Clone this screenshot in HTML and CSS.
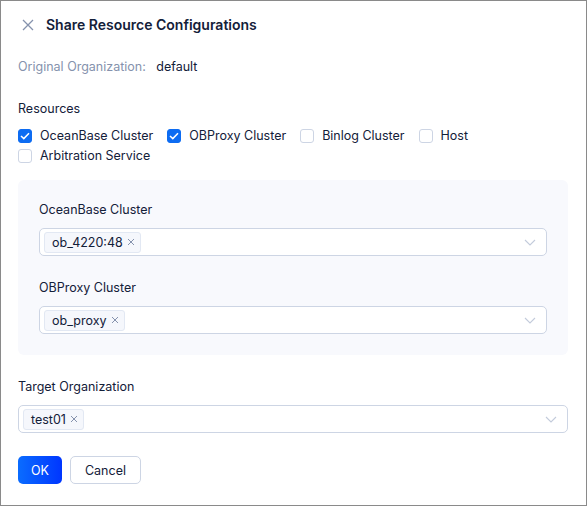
FILE: index.html
```html
<!DOCTYPE html>
<html lang="en">
<head>
  <meta charset="UTF-8" />
  <title>Share Resource Configurations</title>
  <link rel="stylesheet" href="styles.css">
</head>
<body>

<div class="modal">
  <header class="modal-header">
    <span class="close">
      <svg width="12" height="12" viewBox="0 0 12 12"><path d="M1 1L11 11M11 1L1 11" stroke="#8592ad" stroke-width="1.3" fill="none"/></svg>
    </span>
    <h1>Share Resource Configurations</h1>
  </header>

  <div class="origin">
    <span class="origin-label">Original Organization:</span>
    <span class="origin-value">default</span>
  </div>

  <div class="field resources">
    <label class="field-label">Resources</label>
    <div class="checks">
      <label class="check"><span class="box checked"><svg width="10" height="8" viewBox="0 0 10 8"><path d="M1 4L3.8 6.6L9 1.2" stroke="#fff" stroke-width="1.5" fill="none"/></svg></span>OceanBase Cluster</label>
      <label class="check"><span class="box checked"><svg width="10" height="8" viewBox="0 0 10 8"><path d="M1 4L3.8 6.6L9 1.2" stroke="#fff" stroke-width="1.5" fill="none"/></svg></span>OBProxy Cluster</label>
      <label class="check"><span class="box"></span>Binlog Cluster</label>
      <label class="check"><span class="box"></span>Host</label>
      <label class="check"><span class="box"></span>Arbitration Service</label>
    </div>
  </div>

  <div class="panel">
    <div class="field">
      <label class="field-label">OceanBase Cluster</label>
      <div class="select">
        <span class="tag">ob_4220:48<svg class="tag-x" width="8" height="8" viewBox="0 0 8 8"><path d="M1 1L7 7M7 1L1 7" stroke="#8592ad" stroke-width="1" fill="none"/></svg></span>
        <svg class="arrow" width="12" height="12" viewBox="0 0 12 12"><path d="M1 4L6 9L11 4" stroke="#c3cbdb" stroke-width="1.1" fill="none"/></svg>
      </div>
    </div>
    <div class="field">
      <label class="field-label">OBProxy Cluster</label>
      <div class="select">
        <span class="tag">ob_proxy<svg class="tag-x" width="8" height="8" viewBox="0 0 8 8"><path d="M1 1L7 7M7 1L1 7" stroke="#8592ad" stroke-width="1" fill="none"/></svg></span>
        <svg class="arrow" width="12" height="12" viewBox="0 0 12 12"><path d="M1 4L6 9L11 4" stroke="#c3cbdb" stroke-width="1.1" fill="none"/></svg>
      </div>
    </div>
  </div>

  <div class="field">
    <label class="field-label">Target Organization</label>
    <div class="select">
      <span class="tag">test01<svg class="tag-x" width="8" height="8" viewBox="0 0 8 8"><path d="M1 1L7 7M7 1L1 7" stroke="#8592ad" stroke-width="1" fill="none"/></svg></span>
      <svg class="arrow" width="12" height="12" viewBox="0 0 12 12"><path d="M1 4L6 9L11 4" stroke="#c3cbdb" stroke-width="1.1" fill="none"/></svg>
    </div>
  </div>

  <div class="footer">
    <button class="btn primary">OK</button>
    <button class="btn">Cancel</button>
  </div>
</div>

</body>
</html>
```

FILE: styles.css
```css
html, body {
  margin: 0;
  padding: 0;
  background: #ffffff;
  font-family: Inter, "Noto Sans", sans-serif;
  color: #132039;
  font-size: 12.5px;
}

.modal {
  width: 587px;
  height: 506px;
  box-sizing: border-box;
  border: 1px solid #8a8a8a;
  padding: 0 18px 0 17px;
}

.modal-header {
  display: flex;
  align-items: center;
  height: 20px;
  padding-top: 14px;
}

.close {
  display: flex;
  width: 12px;
  height: 12px;
  margin-left: 4px;
  margin-right: 12px;
}

.modal-header h1 {
  margin: 0;
  font-size: 14px;
  font-weight: 600;
  line-height: 20px;
}

.origin {
  margin-top: 22px;
  line-height: 20px;
}

.origin-label {
  color: #8592ad;
  margin-right: 7px;
}

.field {
  margin-top: 22px;
}

.field-label {
  display: block;
  line-height: 20px;
  margin-bottom: 8px;
}

.resources .field-label {
  margin-bottom: 7px;
}

.checks {
  display: flex;
  flex-wrap: wrap;
}

.check {
  display: flex;
  align-items: center;
  line-height: 20px;
  margin-right: 14px;
}

.box {
  width: 14px;
  height: 14px;
  box-sizing: border-box;
  border: 1px solid #cdd5e4;
  border-radius: 3px;
  margin-right: 8px;
  display: flex;
  align-items: center;
  justify-content: center;
  background: #fff;
}

.box.checked {
  background: #0d6cf2;
  border-color: #0d6cf2;
}

.panel {
  margin-top: 14px;
  background: #f8f9fd;
  border-radius: 6px;
  padding: 1px 21px 21px;
}

.panel .field {
  margin-top: 22px;
}

.panel .field:first-child {
  margin-top: 19px;
}

.select {
  height: 28px;
  box-sizing: border-box;
  border: 1px solid #cdd5e4;
  border-radius: 5px;
  background: #fff;
  display: flex;
  align-items: center;
  padding: 0 10px 0 4px;
}

.tag {
  display: flex;
  align-items: center;
  height: 21px;
  box-sizing: border-box;
  padding: 0 5px 0 7px;
  background: #f5f7fc;
  border: 1px solid #e2e8f3;
  border-radius: 3px;
}

.tag-x {
  margin-left: 4px;
}

.arrow {
  margin-left: auto;
}

.footer {
  display: flex;
  gap: 8px;
  margin-top: 23px;
}

.btn {
  font-family: Inter, "Noto Sans", sans-serif;
  font-size: 12.5px;
  height: 28px;
  padding: 0 14px;
  border: 1px solid #cdd5e4;
  border-radius: 5px;
  background: #fff;
  color: #132039;
}

.btn.primary {
  border: none;
  color: #fff;
  padding: 0 13px;
  background: linear-gradient(90deg, #0a6cff, #0036ff);
}
```
